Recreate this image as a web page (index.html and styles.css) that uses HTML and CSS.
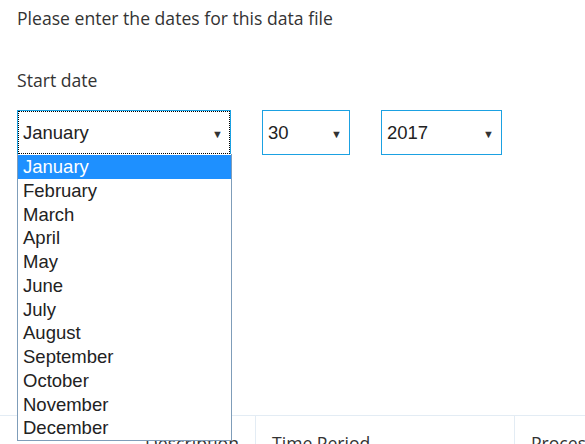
FILE: index.html
```html
<!DOCTYPE html>
<html>
<head>
<meta charset="utf-8">
<link rel="stylesheet" href="styles.css">
</head>
<body>
<div class="page">
  <p class="intro">Please enter the dates for this data file</p>
  <p class="label">Start date</p>
  <div class="row">
    <div class="select-wrap">
      <div class="select month focused"><span>January</span><span class="arrow">&#9660;</span></div>
      <ul class="dropdown">
        <li class="active">January</li>
        <li>February</li>
        <li>March</li>
        <li>April</li>
        <li>May</li>
        <li>June</li>
        <li>July</li>
        <li>August</li>
        <li>September</li>
        <li>October</li>
        <li>November</li>
        <li>December</li>
      </ul>
    </div>
    <div class="select day"><span>30</span><span class="arrow">&#9660;</span></div>
    <div class="select year"><span>2017</span><span class="arrow">&#9660;</span></div>
  </div>
  <div class="table">
    <div class="th c1">Description</div>
    <div class="th c2">Time Period</div>
    <div class="th c3">Processed</div>
  </div>
</div>
</body>
</html>
```
FILE: styles.css
```css
html, body {
  margin: 0;
  padding: 0;
  background: #fff;
  overflow: hidden;
}
.page {
  font-family: "Open Sans", "Noto Sans", sans-serif;
  color: #333;
  width: 585px;
  height: 444px;
  overflow: hidden;
}
.intro {
  margin: 0;
  padding: 6px 0 0 17px;
  font-size: 17.6px;
  line-height: 24px;
}
.label {
  margin: 0;
  padding: 38px 0 0 17px;
  font-size: 17.6px;
  line-height: 24px;
}
.row {
  display: flex;
  padding: 18px 0 0 17px;
  gap: 31px;
  align-items: flex-start;
}
.select-wrap {
  position: relative;
}
.select {
  box-sizing: border-box;
  height: 45px;
  border: 1px solid #1ba1e2;
  display: flex;
  align-items: center;
  justify-content: space-between;
  padding: 0 7px 0 5px;
  font-family: "Liberation Sans", Arial, sans-serif;
  font-size: 18.5px;
  color: #222;
}
.select.focused {
  outline: 1px dotted #000;
  outline-offset: -2px;
}
.arrow {
  font-size: 11px;
  color: #333;
  padding-top: 2px;
}
.month { width: 214px; }
.day { width: 88px; }
.year { width: 121px; }
.dropdown {
  position: absolute;
  top: 44px;
  left: 0;
  box-sizing: border-box;
  width: 215px;
  margin: 0;
  padding: 1px 0 0;
  list-style: none;
  background: #fff;
  border: 1px solid #7f9db9;
  border-top: none;
  z-index: 10;
  font-family: "Liberation Sans", Arial, sans-serif;
  font-size: 18.5px;
  color: #222;
}
.dropdown li {
  height: 23.75px;
  line-height: 23.75px;
  padding-left: 5px;
}
.dropdown li.active {
  background: #1e90ff;
  color: #fff;
}
.table {
  margin-top: 260px;
  display: grid;
  grid-template-columns: 255px 259px 1fr;
  border-top: 1px solid #e3ecf4;
  font-size: 17.6px;
}
.th {
  padding: 15px 16px;
  color: #333;
  white-space: nowrap;
  overflow: hidden;
}
.c1 { text-align: right; }
.c2, .c3 { border-left: 1px solid #e3ecf4; }
```
